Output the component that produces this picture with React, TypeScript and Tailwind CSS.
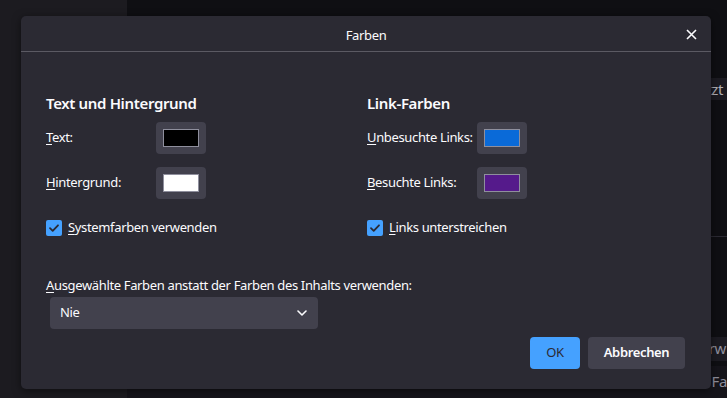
import React from 'react';

const font = { fontFamily: '"Noto Sans", "Open Sans", sans-serif' };

const Swatch: React.FC<{ color: string }> = ({ color }) => (
  <button className="flex h-[32px] w-[50px] items-center justify-center rounded-[4px] bg-[#42414d]">
    <span className={`block h-[18px] w-[36px] border border-[#8f8f9d] ${color}`} />
  </button>
);

const Check: React.FC<{ children: React.ReactNode }> = ({ children }) => (
  <label className="flex items-center gap-[6px]">
    <span className="flex h-[16px] w-[16px] items-center justify-center rounded-[2px] bg-[#45a1ff]">
      <svg width="12" height="12" viewBox="0 0 12 12" fill="none">
        <path d="M2 6.2 4.7 8.8 10 3.3" stroke="#2b2a33" strokeWidth="1.8" strokeLinecap="round" strokeLinejoin="round" />
      </svg>
    </span>
    <span>{children}</span>
  </label>
);

const Row: React.FC<{ label: React.ReactNode; color: string }> = ({ label, color }) => (
  <div className="flex items-center">
    <span className="w-[110px] whitespace-nowrap">{label}</span>
    <Swatch color={color} />
  </div>
);

const u = (c: string) => <u className="underline-offset-2">{c}</u>;

const App: React.FC = () => {
  return (
    <div className="relative flex h-[398px] w-[727px] overflow-hidden text-[13px] tracking-[-0.35px] text-[#fbfbfe]" style={font}>
      {/* page behind the dialog */}
      <div className="w-[127px] bg-[#1c1b20]" />
      <div className="flex flex-1 flex-col bg-[#0f0f13] text-[#8f8f9d]">
        <div className="mt-[78px] flex h-[22px] items-center justify-end bg-[#1c1b22] pr-[4px] text-[15px] text-[#b0b0b8]">Zuletzt</div>
        <div className="mt-[136px] h-px bg-[#2b2a33]" />
        <div className="mt-[100px] flex h-[30px] items-center justify-end bg-[#1c1b22] pr-[1px] text-[15px]">
          <span><u className="underline-offset-2">E</u>rw</span>
        </div>
        <div className="mt-[5px] flex h-[40px] justify-end bg-[#15141a] pt-[4px] text-[15px]">Fa</div>
      </div>

      {/* dialog */}
      <div className="absolute left-[21px] top-[16px] flex h-[373px] w-[690px] flex-col rounded-[5px] bg-[#2b2a33] shadow-[0_2px_8px_rgba(0,0,0,0.5)]">
        <div className="relative flex h-[36px] items-center justify-center border-b border-[#5b5a63]">
          <span className="pt-[5px]">Farben</span>
          <button className="absolute right-[14px] top-[13px]">
            <svg width="11" height="11" viewBox="0 0 11 11">
              <path d="M1 1 10 10M10 1 1 10" stroke="#fbfbfe" strokeWidth="1.6" />
            </svg>
          </button>
        </div>

        <div className="flex flex-1 flex-col px-[25px] pt-[41px]">
          <div className="grid grid-cols-[321px_1fr]">
            <div className="flex flex-col">
              <h2 className="text-[15px] font-semibold leading-[20px]">Text und Hintergrund</h2>
              <div className="mt-[9px] flex flex-col gap-[13px]">
                <Row label={<>{u('T')}ext:</>} color="bg-black" />
                <Row label={<>{u('H')}intergrund:</>} color="bg-white" />
              </div>
              <div className="mt-[19px]">
                <Check>{u('S')}ystemfarben verwenden</Check>
              </div>
            </div>
            <div className="flex flex-col">
              <h2 className="text-[15px] font-semibold leading-[20px]">Link-Farben</h2>
              <div className="mt-[9px] flex flex-col gap-[13px]">
                <Row label={<>{u('U')}nbesuchte Links:</>} color="bg-[#0a6ad8]" />
                <Row label={<>{u('B')}esuchte Links:</>} color="bg-[#551a8b]" />
              </div>
              <div className="mt-[19px]">
                <Check>{u('L')}inks unterstreichen</Check>
              </div>
            </div>
          </div>

          <div className="mt-[38px] leading-[18px]">{u('A')}usgewählte Farben anstatt der Farben des Inhalts verwenden:</div>
          <button className="ml-[4px] mt-[3px] flex h-[32px] w-[268px] items-center justify-between rounded-[4px] bg-[#42414d] pl-[10px] pr-[11px]">
            <span>Nie</span>
            <svg width="10" height="6" viewBox="0 0 10 6" fill="none">
              <path d="M1 1 5 5 9 1" stroke="#fbfbfe" strokeWidth="1.6" strokeLinecap="round" strokeLinejoin="round" />
            </svg>
          </button>

          <div className="mt-[8px] flex justify-end gap-[8px] pr-[1px]">
            <button className="h-[32px] w-[50px] rounded-[4px] bg-[#45a1ff] text-[#2b2a33]">OK</button>
            <button className="h-[32px] w-[97px] rounded-[4px] bg-[#42414d] font-semibold">Abbrechen</button>
          </div>
        </div>
      </div>
    </div>
  );
};

export default App;
